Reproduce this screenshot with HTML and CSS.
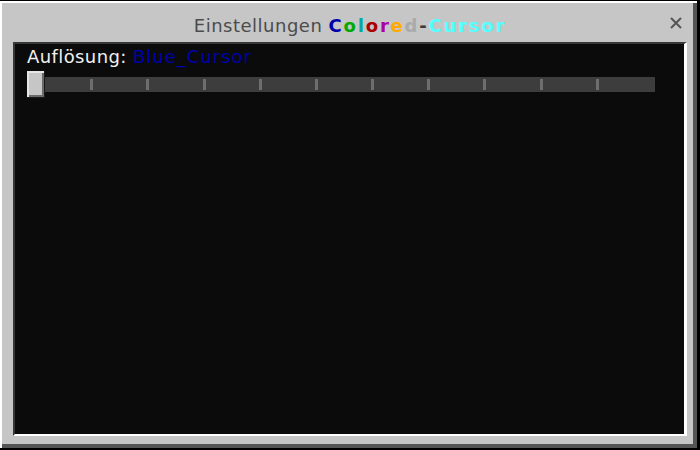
FILE: index.html
```html
<!DOCTYPE html>
<html lang="de">
<head>
    <meta charset="UTF-8">
    <title>Einstellungen Colored-Cursor</title>
    <link rel="stylesheet" href="styles.css">
</head>
<body>

    <div class="window">
        <!-- Title bar -->
        <div class="title-bar">
            <span></span>
            <h1 class="title">
                Einstellungen
                <span class="brand"><span class="c-blue">C</span><span class="c-green">o</span><span class="c-teal">l</span><span class="c-red">o</span><span class="c-purple">r</span><span class="c-gold">e</span><span class="c-gray">d</span><span class="c-dark">-</span><span class="c-aqua">Cursor</span></span>
            </h1>
            <button class="close" title="Schließen">
                <svg width="12" height="12" viewBox="0 0 12 12">
                    <path d="M1 1 L11 11 M11 1 L1 11" stroke="#555" stroke-width="2" fill="none"/>
                </svg>
            </button>
        </div>

        <!-- Settings content -->
        <div class="content">
            <p class="label">Auflösung: <span class="value">Blue_Cursor</span></p>

            <div class="slider">
                <div class="track">
                    <span class="tick hidden"></span>
                    <span class="tick"></span>
                    <span class="tick"></span>
                    <span class="tick"></span>
                    <span class="tick"></span>
                    <span class="tick"></span>
                    <span class="tick"></span>
                    <span class="tick"></span>
                    <span class="tick"></span>
                    <span class="tick"></span>
                    <span class="tick"></span>
                    <span class="tick hidden"></span>
                </div>
                <div class="thumb"></div>
            </div>
        </div>
    </div>

</body>
</html>
```

FILE: styles.css
```css
/* General */
body {
    margin: 0;
    background: #000;
    font-family: "DejaVu Sans", sans-serif;
    height: 450px;
    overflow: hidden;
}

/* Outer window */
.window {
    box-sizing: border-box;
    width: 697px;
    height: 447px;
    margin-top: 1px;
    padding: 0 10px 12px 13px;
    background: #c6c6c6;
    box-shadow: inset 2px 2px 0 #fff, inset -4px -4px 0 #555;
    display: flex;
    flex-direction: column;
}

/* Title bar */
.title-bar {
    height: 41px;
    display: grid;
    grid-template-columns: 1fr auto 1fr;
    align-items: center;
}

.title {
    margin: 0;
    padding-top: 9px;
    line-height: 32px;
    font-size: 18px;
    font-weight: normal;
    letter-spacing: 0.5px;
    color: #4c4c4c;
    white-space: nowrap;
}

.brand {
    font-weight: bold;
    letter-spacing: 1.8px;
}

.c-blue { color: #0000aa; }
.c-green { color: #00aa00; }
.c-teal { color: #00aaaa; }
.c-red { color: #aa0000; }
.c-purple { color: #aa00aa; }
.c-gold { color: #ffaa00; }
.c-gray { color: #aaaaaa; }
.c-dark { color: #3a3a3a; }
.c-aqua { color: #55ffff; }

.close {
    justify-self: end;
    margin: 2px 5px 0 0;
    padding: 0;
    border: none;
    background: none;
    width: 12px;
    height: 12px;
    display: flex;
    cursor: pointer;
}

/* Dark content panel */
.content {
    flex: 1;
    background: #0b0b0b;
    border-top: 2px solid #373737;
    border-left: 2px solid #373737;
    border-right: 3px solid #fff;
    border-bottom: 2px solid #fff;
    padding: 3px 12px;
}

.label {
    margin: 0;
    font-size: 18px;
    line-height: 20px;
    letter-spacing: 0.4px;
    color: #f0f0f0;
}

.value {
    color: #0000aa;
    letter-spacing: 1px;
}

/* Slider */
.slider {
    position: relative;
    width: 628px;
    height: 27px;
    margin-top: 4px;
    padding-top: 6px;
    box-sizing: border-box;
}

.track {
    margin-left: 1px;
    height: 15px;
    background: #3d3d3d;
    display: flex;
    align-items: center;
    justify-content: space-between;
    padding-left: 6px;
}

.tick {
    width: 3px;
    height: 11px;
    background: #6e6e6e;
}

.tick.hidden {
    visibility: hidden;
}

.thumb {
    position: absolute;
    top: 0;
    left: 0;
    width: 18px;
    height: 27px;
    box-sizing: border-box;
    background: #c6c6c6;
    border-right: 1px solid #1a1a1a;
    border-bottom: 1px solid #1a1a1a;
    box-shadow: inset 2px 2px 0 #e6e6e6, inset -2px -2px 0 #6a6a6a;
}
```
